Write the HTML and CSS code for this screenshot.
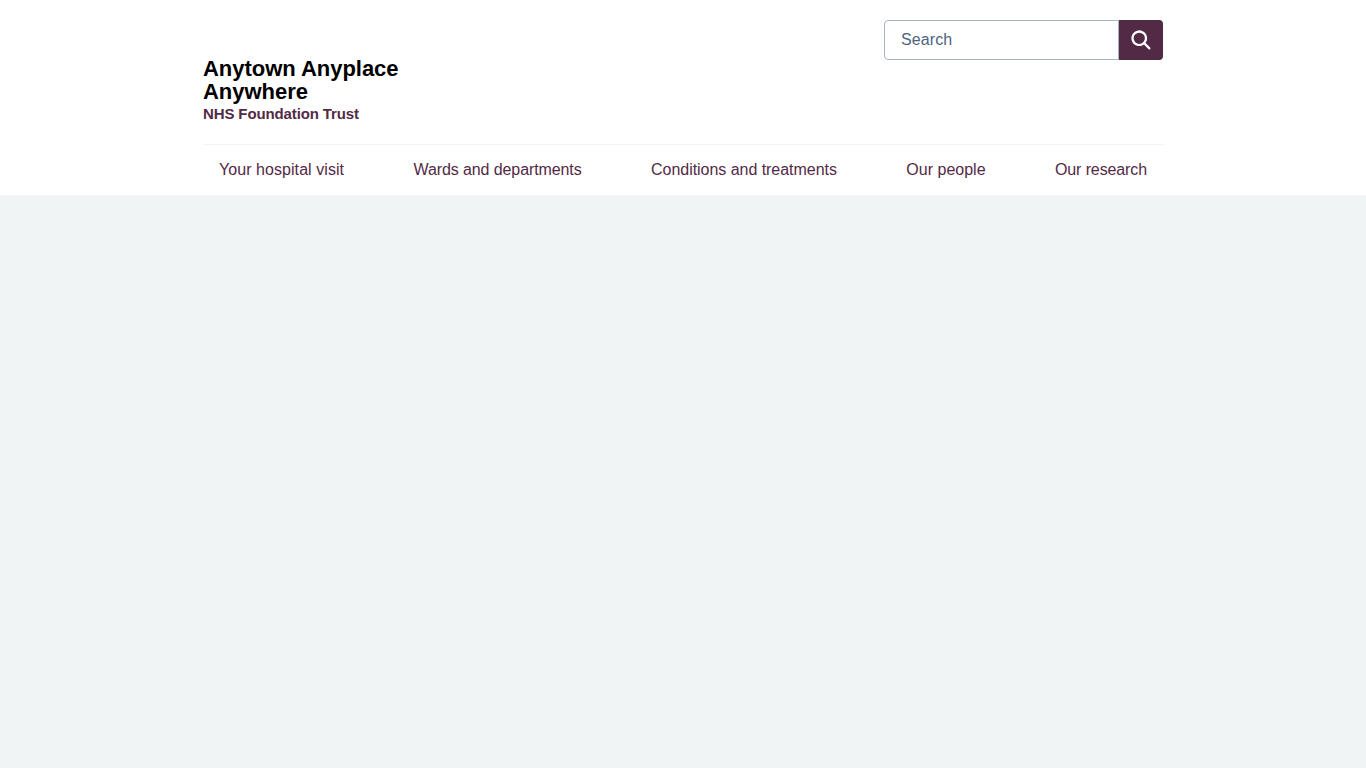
FILE: index.html
```html
<!DOCTYPE html>
<html lang="en">
<head>
<meta charset="utf-8">
<title>Anytown Anyplace Anywhere NHS Foundation Trust</title>
<link rel="stylesheet" href="styles.css">
</head>
<body>
<header class="header">
  <div class="container header-top">
    <a class="logo" href="#">
      <span class="org-name">Anytown Anyplace<br>Anywhere</span>
      <span class="org-descriptor">NHS Foundation Trust</span>
    </a>
    <form class="search">
      <input class="search-input" type="search" placeholder="Search" aria-label="Search">
      <button class="search-button" type="button" aria-label="Search">
        <svg class="search-icon" viewBox="0 0 24 24" aria-hidden="true"><path d="M19.71 18.29l-4.11-4.1a7 7 0 1 0-1.41 1.41l4.1 4.11a1 1 0 0 0 1.42 0 1 1 0 0 0 0-1.42zM5 10a5 5 0 1 1 5 5 5 5 0 0 1-5-5z"/></svg>
      </button>
    </form>
  </div>
  <nav class="container">
    <ul class="nav-list">
      <li><a class="nav-link nav-link--visit" href="#">Your hospital visit</a></li>
      <li><a class="nav-link nav-link--wards" href="#">Wards and departments</a></li>
      <li><a class="nav-link nav-link--conditions" href="#">Conditions and treatments</a></li>
      <li><a class="nav-link" href="#">Our people</a></li>
      <li><a class="nav-link nav-link--research" href="#">Our research</a></li>
    </ul>
  </nav>
</header>
</body>
</html>
```
FILE: styles.css
```css
* { box-sizing: border-box; }
body {
  margin: 0;
  background: #f0f4f5;
  font-family: "Liberation Sans", Arial, sans-serif;
  font-size: 16px;
  line-height: 24px;
}
.header { background: #fff; height: 195px; }
.container { width: 960px; margin: 0 auto; }
.header-top {
  display: flex;
  justify-content: space-between;
  align-items: flex-start;
  height: 144px;
  padding-top: 20px;
}
.logo { display: block; padding-top: 37px; text-decoration: none; }
.org-name {
  display: block;
  color: #000;
  font-size: 22px;
  font-weight: 700;
  line-height: 23px;
  letter-spacing: -0.03px;
}
.org-descriptor {
  display: block;
  color: #532a45;
  font-size: 15px;
  font-weight: 700;
  line-height: 21px;
  letter-spacing: -0.12px;
}
.search { display: flex; }
.search-input {
  appearance: none;
  width: 235px;
  height: 40px;
  margin: 0;
  padding: 0 16px;
  border: 1px solid #a8b5c0;
  border-radius: 4px 0 0 4px;
  background: #fff;
  font: inherit;
  letter-spacing: 0.1px;
}
.search-input::placeholder { color: #4c6480; opacity: 1; }
.search-button {
  display: flex;
  align-items: center;
  justify-content: center;
  width: 44px;
  height: 40px;
  padding: 0;
  border: 0;
  border-radius: 0 4px 4px 0;
  background: #532a45;
}
.search-icon { width: 27px; height: 27px; fill: #fff; }
.nav-list {
  display: flex;
  justify-content: space-between;
  margin: 0;
  padding: 0;
  border-top: 1px solid #f0f4f5;
  list-style: none;
}
.nav-link { display: block; padding: 13px 16px; color: #532a45; text-decoration: none; }
.nav-link--visit { letter-spacing: 0.06px; }
.nav-link--wards { letter-spacing: -0.1px; }
.nav-link--conditions { letter-spacing: -0.04px; }
.nav-link--research { letter-spacing: -0.12px; }
```
